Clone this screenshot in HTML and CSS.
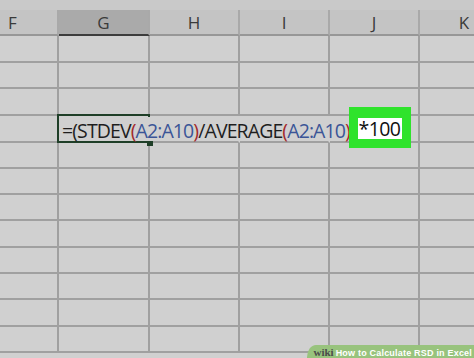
FILE: index.html
```html
<!DOCTYPE html>
<html>
<head>
<meta charset="utf-8">
<link rel="stylesheet" href="styles.css">
</head>
<body>
<div class="sheet">
  <div class="topstrip"></div>
  <div class="grid">
    <div class="hd">F</div>
    <div class="hd sel">G</div>
    <div class="hd">H</div>
    <div class="hd">I</div>
    <div class="hd">J</div>
    <div class="hd">K</div>

    <div class="c"></div><div class="c"></div><div class="c"></div><div class="c"></div><div class="c"></div><div class="c"></div>
    <div class="c"></div><div class="c"></div><div class="c"></div><div class="c"></div><div class="c"></div><div class="c"></div>
    <div class="c"></div><div class="c"></div><div class="c"></div><div class="c"></div><div class="c"></div><div class="c"></div>

    <div class="c"></div>
    <div class="c nr active">
      <span class="selbox"></span>
      <span class="selcorner"></span>
      <span class="handle"></span>
      <span class="formula">=(STDEV<span class="p">(</span><span class="r">A2:A10</span><span class="p">)</span>/AVERAGE<span class="p">(</span><span class="r">A2:A10</span><span class="p">)</span></span>
    </div>
    <div class="c nr"></div><div class="c nr"></div><div class="c"></div><div class="c"></div>

    <div class="c"></div><div class="c"></div><div class="c"></div><div class="c"></div><div class="c"></div><div class="c"></div>
    <div class="c"></div><div class="c"></div><div class="c"></div><div class="c"></div><div class="c"></div><div class="c"></div>
    <div class="c"></div><div class="c"></div><div class="c"></div><div class="c"></div><div class="c"></div><div class="c"></div>
    <div class="c"></div><div class="c"></div><div class="c"></div><div class="c"></div><div class="c"></div><div class="c"></div>
    <div class="c"></div><div class="c"></div><div class="c"></div><div class="c"></div><div class="c"></div><div class="c"></div>
    <div class="c"></div><div class="c"></div><div class="c"></div><div class="c"></div><div class="c"></div><div class="c"></div>
    <div class="c"></div><div class="c"></div><div class="c"></div><div class="c"></div><div class="c"></div><div class="c"></div>
    <div class="c"></div><div class="c"></div><div class="c"></div><div class="c"></div><div class="c"></div><div class="c"></div>
  </div>
  <div class="highlight"><span class="hl-inner">*100</span></div>
  <div class="wm"><span class="wm-wiki">wiki</span><span class="wm-how">How</span> to Calculate RSD in Excel</div>
</div>
</body>
</html>
```
FILE: styles.css
```css
html, body {
  margin: 0;
  padding: 0;
  width: 474px;
  height: 358px;
  overflow: hidden;
  background: #d0d0d0;
}
.sheet {
  position: relative;
  width: 474px;
  height: 358px;
  overflow: hidden;
  font-family: "Open Sans", "Liberation Sans", sans-serif;
}
.topstrip {
  height: 10px;
  background: #c9c9c9;
}
.grid {
  display: grid;
  margin-left: -32px;
  grid-template-columns: 91px 91px 90px 90px 90px 90px;
  grid-template-rows: 26px 27px 26px 27px 27px 26px 26px 26px 27px 26px 26px 27px 26px;
  background: #d0d0d0;
}
.hd {
  box-sizing: border-box;
  background: #c4c4c4;
  border-right: 2px solid #a9a9a9;
  border-bottom: 2px solid #979797;
  color: #3a3a3a;
  font-family: "Open Sans", "Liberation Sans", sans-serif;
  font-size: 17px;
  display: flex;
  align-items: center;
  justify-content: center;
  padding-top: 1px;
}
.hd.sel {
  background: #aaaaaa;
  border-bottom: 2px solid #3c3c3c;
}
.c {
  box-sizing: border-box;
  border-right: 2px solid #a0a0a0;
  border-bottom: 2px solid #a0a0a0;
}
.c.nr {
  border-right-color: transparent;
}
.active {
  position: relative;
}
.formula {
  position: absolute;
  left: 3px;
  top: 1px;
  white-space: nowrap;
  font-family: "Open Sans", "Liberation Sans", sans-serif;
  font-size: 19.5px;
  letter-spacing: -0.9px;
  color: #1e1e1e;
  line-height: 27px;
  z-index: 2;
}
.p { color: #a3282b; }
.r { color: #3b5597; }
.selbox {
  position: absolute;
  left: -2px;
  top: -2px;
  right: -2px;
  bottom: -2px;
  border: 2px solid #1f3f28;
  border-right: none;
  z-index: 1;
}
.selcorner {
  position: absolute;
  right: -2px;
  top: -2px;
  width: 2px;
  height: 3px;
  background: #1f3f28;
  z-index: 1;
}
.handle {
  position: absolute;
  right: -5px;
  bottom: -5px;
  width: 6px;
  height: 5px;
  background: #1f3f28;
  z-index: 3;
}
.highlight {
  position: absolute;
  left: 349px;
  top: 107px;
  width: 62px;
  height: 41px;
  background: #2fe32c;
  z-index: 5;
  display: flex;
  align-items: center;
  justify-content: center;
}
.hl-inner {
  background: #ffffff;
  color: #111;
  font-family: "Open Sans", "Liberation Sans", sans-serif;
  font-size: 19.5px;
  letter-spacing: -0.6px;
  line-height: 21px;
  padding: 0 2px 0 1px;
  height: 21px;
  margin-top: 1px;
}
.wm {
  position: absolute;
  right: 0;
  top: 345px;
  height: 14px;
  background: #98c37d;
  border-top-left-radius: 9px 12px;
  color: #ffffff;
  font-family: "Liberation Sans", sans-serif;
  font-weight: bold;
  font-size: 9px;
  letter-spacing: 0.2px;
  line-height: 14px;
  padding-left: 6px;
  padding-right: 2px;
  box-sizing: border-box;
  white-space: nowrap;
  z-index: 6;
}
.wm-wiki {
  color: #4b4b4b;
  font-family: "Liberation Serif", serif;
  font-size: 11px;
  letter-spacing: 0;
  margin-right: 2px;
}
.wm-how {
  color: #ffffff;
}
```
